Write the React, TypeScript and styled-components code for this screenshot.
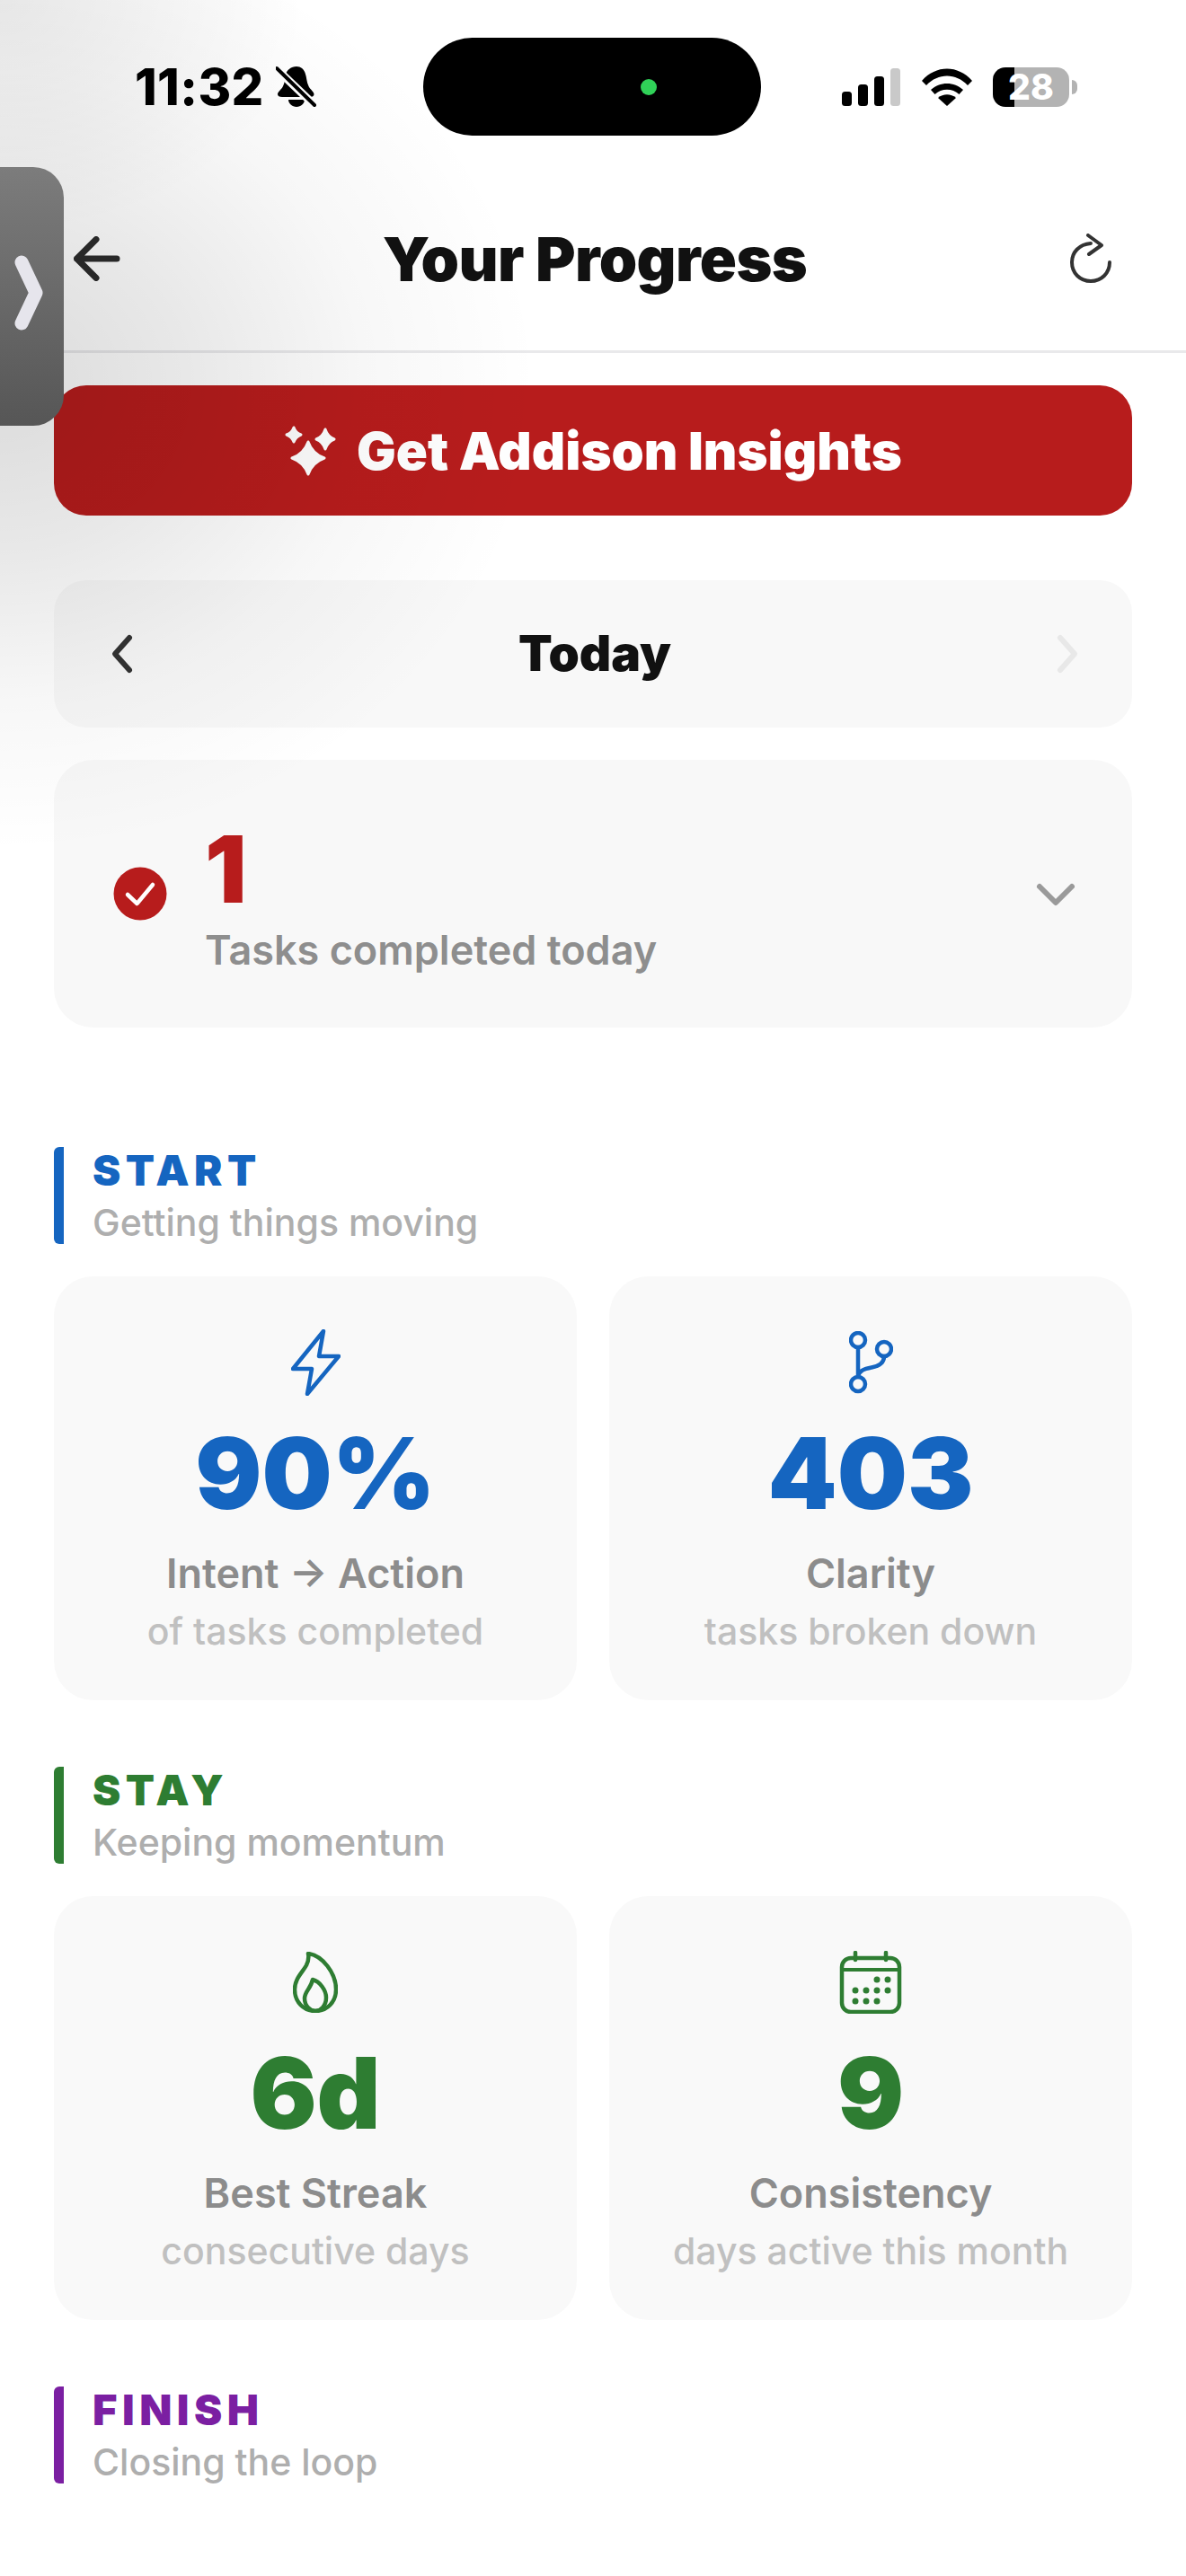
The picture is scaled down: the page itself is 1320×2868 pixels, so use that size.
import React from 'react';
import styled, { createGlobalStyle } from 'styled-components';

const GlobalStyle = createGlobalStyle`
  html, body {
    margin: 0;
    padding: 0;
    background: #fff;
  }
  body {
    font-family: Inter, "Liberation Sans", sans-serif;
  }
`;

const Page = styled.div`
  position: relative;
  width: 1320px;
  height: 2868px;
  overflow: hidden;
  background: #fff;
`;

const Shade = styled.div`
  position: absolute;
  left: 0;
  top: 0;
  width: 760px;
  height: 1000px;
  pointer-events: none;
  background:
    radial-gradient(ellipse 340px 260px at 0px 0px, rgba(0, 0, 0, 0.08) 0%, rgba(0, 0, 0, 0) 100%),
    radial-gradient(ellipse 600px 520px at 0px 430px, rgba(0, 0, 0, 0.14) 0%, rgba(0, 0, 0, 0.09) 35%, rgba(0, 0, 0, 0.03) 68%, rgba(0, 0, 0, 0) 100%);
  z-index: 2;
`;

const Handle = styled.div`
  position: absolute;
  left: 0;
  top: 186px;
  width: 71px;
  height: 288px;
  border-radius: 0 34px 34px 0;
  background: linear-gradient(180deg, #7c7c7c 0%, #565656 100%);
  display: flex;
  align-items: center;
  justify-content: flex-start;
  z-index: 3;
  svg {
    margin-left: 16px;
    margin-top: -8px;
  }
`;

const StatusBar = styled.div`
  height: 190px;
  box-sizing: border-box;
  padding: 42px 0 0 150px;
  display: grid;
  grid-template-columns: 321px 376px 1fr;
  align-items: start;
`;

const TimeGroup = styled.div`
  height: 109px;
  display: flex;
  align-items: center;
  gap: 13px;
`;

const Time = styled.span`
  font-size: 56px;
  font-weight: 800;
  letter-spacing: 0.4px;
  color: #000;
`;

const Island = styled.div`
  height: 109px;
  border-radius: 55px;
  background: #000;
  display: flex;
  align-items: center;
  justify-content: flex-end;
  padding-right: 116px;
  box-sizing: border-box;
`;

const Dot = styled.div`
  width: 18px;
  height: 18px;
  border-radius: 50%;
  background: #30d158;
`;

const Indicators = styled.div`
  display: flex;
  align-items: center;
  gap: 22px;
  height: 109px;
  margin-left: 90px;
`;

const Battery = styled.div`
  position: relative;
  width: 85px;
  height: 44px;
  border-radius: 14px;
  background: linear-gradient(90deg, #000 0 28%, #b3b3b3 28% 100%);
  display: flex;
  align-items: center;
  justify-content: center;
  color: #fff;
  font-size: 39px;
  font-weight: 800;
  line-height: 1;
  &::after {
    content: '';
    position: absolute;
    right: -9px;
    top: 14px;
    width: 6px;
    height: 16px;
    border-radius: 0 6px 6px 0;
    background: #b3b3b3;
  }
`;

const Header = styled.header`
  height: 203px;
  box-sizing: border-box;
  border-bottom: 3px solid #e9e9eb;
  padding: 0 82px 4px 82px;
  display: flex;
  align-items: center;
  justify-content: space-between;
`;

const Title = styled.h1`
  margin: 0;
  font-size: 68px;
  font-weight: 900;
  letter-spacing: -0.6px;
  color: #111;
`;

const Main = styled.main`
  padding: 36px 60px 0;
`;

const InsightButton = styled.button`
  width: 100%;
  height: 145px;
  border: 0;
  border-radius: 36px;
  background: #b71c1c;
  color: #fff;
  font-family: inherit;
  font-size: 58px;
  font-weight: 900;
  display: flex;
  align-items: center;
  justify-content: center;
  gap: 23px;
`;

const DayNav = styled.div`
  margin-top: 72px;
  height: 164px;
  box-sizing: border-box;
  padding: 0 50px 0 54px;
  border-radius: 36px;
  background: #f8f8f8;
  display: flex;
  align-items: center;
  justify-content: space-between;
`;

const DayLabel = styled.span`
  font-size: 55px;
  font-weight: 900;
  color: #111;
  margin-top: -2px;
`;

const SummaryCard = styled.div`
  margin-top: 36px;
  height: 298px;
  box-sizing: border-box;
  padding: 0 62px 0 66px;
  border-radius: 44px;
  background: #f8f8f8;
  display: flex;
  align-items: center;
  gap: 42px;
`;

const SummaryText = styled.div`
  flex: 1;
  display: flex;
  flex-direction: column;
  margin-top: 6px;
`;

const SummaryValue = styled.span`
  font-size: 103px;
  line-height: 112px;
  font-weight: 900;
  color: #b71c1c;
`;

const SummaryLabel = styled.span`
  margin-top: 8px;
  font-size: 45px;
  line-height: 52px;
  font-weight: 600;
  color: #8e8e8e;
`;

const Section = styled.section<{ $gap: number }>`
  margin-top: ${(p) => p.$gap}px;
`;

const SectionHead = styled.div<{ $color: string }>`
  height: 108px;
  box-sizing: border-box;
  border-left: 11px solid ${(p) => p.$color};
  border-radius: 6px;
  padding-left: 32px;
  display: flex;
  flex-direction: column;
  justify-content: center;
  color: ${(p) => p.$color};
`;

const SectionTitle = styled.span`
  font-size: 47px;
  line-height: 52px;
  font-weight: 900;
  letter-spacing: 5.5px;
`;

const SectionSub = styled.span`
  margin-top: 7px;
  font-size: 41px;
  line-height: 50px;
  font-weight: 500;
  color: #aeaeae;
`;

const CardGrid = styled.div`
  margin-top: 36px;
  display: grid;
  grid-template-columns: 1fr 1fr;
  gap: 36px;
`;

const StatCard = styled.div`
  height: 472px;
  box-sizing: border-box;
  padding-top: 58px;
  border-radius: 44px;
  background: #f9f9f9;
  display: flex;
  flex-direction: column;
  align-items: center;
`;

const IconSlot = styled.div`
  height: 76px;
  display: flex;
  align-items: center;
  justify-content: center;
`;

const StatValue = styled.div<{ $color: string }>`
  margin-top: 25px;
  font-size: 110px;
  line-height: 120px;
  font-weight: 900;
  color: ${(p) => p.$color};
`;

const StatLabel = styled.div`
  margin-top: 24px;
  font-size: 45px;
  line-height: 56px;
  font-weight: 600;
  color: #8c8c8c;
`;

const StatSub = styled.div`
  margin-top: 9px;
  font-size: 41px;
  line-height: 54px;
  font-weight: 500;
  color: #c0c0c0;
`;

const BLUE = '#1565c0';
const GREEN = '#2e7d32';
const PURPLE = '#7b1fa2';

const BellOff = () => (
  <svg width="46" height="48" viewBox="0 0 46 48">
    <path d="M23 1c5 0 8 3 9.500 7 2 5 1.500 10 4 15 2 4 6 6 6 9 0 2-2 3-4 3H7c-3 0-5-1-5-3 0-3 4-5 6-9 2-4 2-8 3-13 1-5 6-9 12-9z" fill="#000" />
    <path d="M14 38h18c0 4-4 8-9 8s-9-4-9-8z" fill="#000" />
    <path d="M0 3l44 42" stroke="#fff" strokeWidth="9" />
    <path d="M1 3l42 41" stroke="#000" strokeWidth="4" strokeLinecap="round" />
  </svg>
);

const Signal = () => (
  <svg width="66" height="42" viewBox="0 0 66 42">
    <rect x="0" y="26" width="11" height="16" rx="3.500" fill="#000" />
    <rect x="18" y="18" width="11" height="24" rx="3.500" fill="#000" />
    <rect x="36" y="9" width="11" height="33" rx="3.500" fill="#000" />
    <rect x="54" y="0" width="11" height="42" rx="3.500" fill="#c9c9c9" />
  </svg>
);

const Wifi = () => (
  <svg width="58" height="42" viewBox="0 0 58 42">
    <path d="M29 42 19 33c5.500-5 14.500-5 20 0z" fill="#000" />
    <path d="M11 24c10-9.500 26-9.500 36 0l-4.500 5c-7.500-7-19.500-7-27 0z" fill="#000" />
    <path d="M1 14c15.500-18 40.500-18 56 0l-5 5C39 5 19 5 6 19z" fill="#000" />
  </svg>
);

const ArrowLeft = () => (
  <svg width="52" height="50" viewBox="0 0 52 50" fill="none" stroke="#2c2c2c" strokeWidth="7" strokeLinecap="round" strokeLinejoin="round">
    <path d="M3.500 25H48M25 3.500 3.500 25 25 46.500" />
  </svg>
);

const Refresh = () => (
  <svg width="48" height="56" viewBox="0 0 48 56" fill="none" stroke="#333" strokeWidth="4" strokeLinecap="round" strokeLinejoin="round">
    <path d="M24 11C11 12 3 21 3 32c0 12 9 21 21 21s21-9 21-21" />
    <path d="M21 2l15 11-14 10" />
  </svg>
);

const Chevron = ({ dir, color, size = 46, weight = 6 }: { dir: 'left' | 'right' | 'down'; color: string; size?: number; weight?: number }) => {
  const d = dir === 'left' ? 'M30 5 14 23l16 18' : dir === 'right' ? 'M16 5l16 18-16 18' : 'M5 15l18 18 18-18';
  return (
    <svg width={size} height={size} viewBox="0 0 46 46" fill="none" stroke={color} strokeWidth={weight} strokeLinecap="round" strokeLinejoin="round">
      <path d={d} />
    </svg>
  );
};

const star = (cx: number, cy: number, rx: number, ry: number) => {
  const kx = rx * 0.26;
  const ky = ry * 0.26;
  return `M${cx} ${cy - ry}Q${cx + kx} ${cy - ky} ${cx + rx} ${cy}Q${cx + kx} ${cy + ky} ${cx} ${cy + ry}Q${cx - kx} ${cy + ky} ${cx - rx} ${cy}Q${cx - kx} ${cy - ky} ${cx} ${cy - ry}z`;
};

const Sparkles = () => (
  <svg width="58" height="56" viewBox="0 0 58 56" fill="#fff" stroke="#fff" strokeWidth="3" strokeLinejoin="round">
    <path d={star(27, 36, 18, 18)} />
    <path d={star(11, 10, 8, 8)} />
    <path d={star(46, 15, 10, 11)} />
  </svg>
);

const CheckBadge = () => (
  <svg width="60" height="60" viewBox="0 0 60 60">
    <circle cx="30" cy="30" r="29.500" fill="#b71c1c" />
    <path d="M16 31l10.500 10L44 20" fill="none" stroke="#fff" strokeWidth="4.500" strokeLinecap="round" strokeLinejoin="round" />
  </svg>
);

const Bolt = ({ color }: { color: string }) => (
  <svg width="55" height="74" viewBox="0 0 55 74" fill="none" stroke={color} strokeWidth="4.500" strokeLinejoin="round">
    <path d="M36 2 31 30H53L18 72 23 44H2z" />
  </svg>
);

const Branch = ({ color }: { color: string }) => (
  <svg width="49" height="70" viewBox="0 0 49 70" fill="none" stroke={color} strokeWidth="4.500" strokeLinecap="round">
    <circle cx="10" cy="10" r="8" />
    <circle cx="10" cy="59" r="8" />
    <circle cx="39" cy="20" r="8" />
    <path d="M10 18v33M39 28c0 8-6 11-14 12.500C17 42 11 44 10 51" />
  </svg>
);

const Flame = ({ color }: { color: string }) => (
  <svg width="50" height="68" viewBox="0 0 50 68" fill="none" stroke={color} strokeWidth="4.500" strokeLinejoin="round">
    <path d="M17 2c16 2 31 22 31 40 0 14-10 24-23 24S2 56 2 42c0-12 8-18 13-27 2-4 3-8 2-13z" />
    <path d="M22 31c8 2 15 12 15 20 0 9-6 15-12 15s-12-6-12-14c0-8 7-11 9-21z" />
  </svg>
);

const Calendar = ({ color }: { color: string }) => (
  <svg width="70" height="70" viewBox="0 0 70 70" fill="none" stroke={color}>
    <rect x="3" y="8" width="64" height="60" rx="10" strokeWidth="4.500" />
    <path d="M3 21h64" strokeWidth="4" />
    <path d="M18 2v8M52 2v8" strokeWidth="4.500" strokeLinecap="round" />
    <g fill={color} stroke="none">
      {[[42, 32], [54, 32], [18, 44], [30, 44], [42, 44], [54, 44], [18, 56], [30, 56], [42, 56]].map(([cx, cy]) => (
        <circle key={`${cx}-${cy}`} cx={cx} cy={cy} r="3.500" />
      ))}
    </g>
  </svg>
);

const sections = [
  {
    title: 'START',
    sub: 'Getting things moving',
    color: BLUE,
    gap: 133,
    cards: [
      { icon: Bolt, value: '90%', label: 'Intent → Action', sub: 'of tasks completed' },
      { icon: Branch, value: '403', label: 'Clarity', sub: 'tasks broken down' },
    ],
  },
  {
    title: 'STAY',
    sub: 'Keeping momentum',
    color: GREEN,
    gap: 74,
    cards: [
      { icon: Flame, value: '6d', label: 'Best Streak', sub: 'consecutive days' },
      { icon: Calendar, value: '9', label: 'Consistency', sub: 'days active this month' },
    ],
  },
  {
    title: 'FINISH',
    sub: 'Closing the loop',
    color: PURPLE,
    gap: 74,
    cards: [],
  },
];

const App = () => {
  return (
    <Page>
      <GlobalStyle />
      <Shade />
      <Handle>
        <svg width="32" height="84" viewBox="0 0 32 84" fill="none" stroke="#e6e5ec" strokeWidth="15" strokeLinecap="round" strokeLinejoin="round">
          <path d="M8 8 24 42 8 76" />
        </svg>
      </Handle>
      <StatusBar>
        <TimeGroup>
          <Time>11:32</Time>
          <BellOff />
        </TimeGroup>
        <Island>
          <Dot />
        </Island>
        <Indicators>
          <Signal />
          <Wifi />
          <Battery>28</Battery>
        </Indicators>
      </StatusBar>
      <Header>
        <ArrowLeft />
        <Title>Your Progress</Title>
        <Refresh />
      </Header>
      <Main>
        <InsightButton>
          <Sparkles />
          Get Addison Insights
        </InsightButton>
        <DayNav>
          <Chevron dir="left" color="#333" />
          <DayLabel>Today</DayLabel>
          <Chevron dir="right" color="#e8e8e8" />
        </DayNav>
        <SummaryCard>
          <CheckBadge />
          <SummaryText>
            <SummaryValue>1</SummaryValue>
            <SummaryLabel>Tasks completed today</SummaryLabel>
          </SummaryText>
          <Chevron dir="down" color="#9a9a9a" />
        </SummaryCard>
        {sections.map((section) => (
          <Section key={section.title} $gap={section.gap}>
            <SectionHead $color={section.color}>
              <SectionTitle>{section.title}</SectionTitle>
              <SectionSub>{section.sub}</SectionSub>
            </SectionHead>
            {section.cards.length > 0 && (
              <CardGrid>
                {section.cards.map((card) => (
                  <StatCard key={card.label}>
                    <IconSlot>
                      <card.icon color={section.color} />
                    </IconSlot>
                    <StatValue $color={section.color}>{card.value}</StatValue>
                    <StatLabel>{card.label}</StatLabel>
                    <StatSub>{card.sub}</StatSub>
                  </StatCard>
                ))}
              </CardGrid>
            )}
          </Section>
        ))}
      </Main>
    </Page>
  );
};

export default App;
